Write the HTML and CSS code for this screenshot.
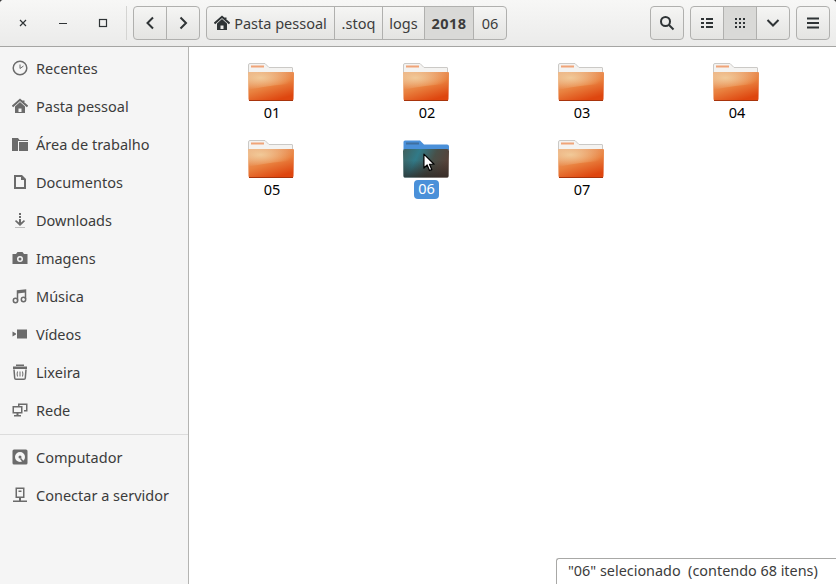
FILE: index.html
```html
<!DOCTYPE html>
<html lang="pt">
<head>
<meta charset="UTF-8" />
<meta name="viewport" content="width=device-width, initial-scale=1" />
<title>06 - Arquivos</title>
<link rel="stylesheet" href="styles.css">
</head>
<body>
  <svg class="defs" aria-hidden="true" xmlns="http://www.w3.org/2000/svg">
    <defs>
      <linearGradient id="folderBody" x1="0.1" y1="0" x2="0.6" y2="1">
        <stop offset="0" stop-color="#eaa87a"/>
        <stop offset="0.55" stop-color="#e9813f"/>
        <stop offset="1" stop-color="#de460f"/>
      </linearGradient>
      <radialGradient id="folderGlow" cx="0.27" cy="0.32" r="0.7">
        <stop offset="0" stop-color="#f2cf9f" stop-opacity="0.9"/>
        <stop offset="1" stop-color="#f2cf9f" stop-opacity="0"/>
      </radialGradient>
      <linearGradient id="folderDark" x1="0" y1="0" x2="1" y2="0.3">
        <stop offset="0" stop-color="#41605c"/>
        <stop offset="0.35" stop-color="#317a88"/>
        <stop offset="0.7" stop-color="#484f48"/>
        <stop offset="1" stop-color="#57433a"/>
      </linearGradient>
      <linearGradient id="folderShade" x1="0" y1="0" x2="0" y2="1">
        <stop offset="0.4" stop-color="#2a2420" stop-opacity="0"/>
        <stop offset="1" stop-color="#2a2420" stop-opacity="0.7"/>
      </linearGradient>
      <symbol id="folder" viewBox="0 0 46 38">
        <path d="M0.500 9V2q0-1.500 1.500-1.500h15l4 4h23q.5 0 .5 .5V10H0.500z" fill="#f4f3f1" stroke="#cbc9c6"/>
        <rect x="3" y="2.500" width="13" height="2" fill="#f0a478"/>
        <path d="M0 10q0-1 1-1h44q1 0 1 1l-.5 26q0 1.500-1.500 1.500H2q-1.500 0-1.500-1.500z" fill="url(#folderBody)"/>
        <path d="M0 10q0-1 1-1h44q1 0 1 1v11q-24 1-46 6z" fill="url(#folderGlow)"/>
        <path d="M1 37.500h44" stroke="#a8340c" stroke-width="1"/>
      </symbol>
      <symbol id="folderSelected" viewBox="0 0 46 38">
        <path d="M0.500 9V2q0-1.500 1.500-1.500h15l4 4h23q2 0 2 2V10H0.500z" fill="#4a90d9"/>
        <rect x="3" y="2.500" width="13" height="2" fill="#3f6f9f"/>
        <path d="M0 11q0-2 2-2h42q2 0 2 2l-.5 25q0 1.500-1.500 1.500H2q-1.500 0-1.500-1.500z" fill="url(#folderDark)"/>
        <path d="M0 11q0-2 2-2h42q2 0 2 2l-.5 25q0 1.500-1.500 1.500H2q-1.500 0-1.500-1.500z" fill="url(#folderShade)"/>
      </symbol>
      <symbol id="home" viewBox="0 0 16 16">
        <path d="M0.500 8.500L8 1.800 15.500 8.500M11.500 4V2.500" fill="none" stroke="currentColor" stroke-width="2"/>
        <path d="M3 8.500V15h10V8.500L8 4zM6.500 10.500h3V14h-3z" fill="currentColor" fill-rule="evenodd"/>
      </symbol>
    </defs>
  </svg>

  <div class="window">
    <header class="toolbar">
      <div class="win-controls">
        <button class="win-btn" aria-label="Fechar">
          <svg viewBox="0 0 16 16"><path d="M5 5l6 6M11 5l-6 6" class="line thin"/></svg>
        </button>
        <button class="win-btn" aria-label="Minimizar">
          <svg viewBox="0 0 16 16"><path d="M4 8.500h8" class="line thin"/></svg>
        </button>
        <button class="win-btn" aria-label="Maximizar">
          <svg viewBox="0 0 16 16"><rect x="4.500" y="4.500" width="7" height="7" class="line thin"/></svg>
        </button>
      </div>
      <div class="toolbar-sep"></div>

      <div class="linked">
        <button class="btn icon-btn" aria-label="Voltar">
          <svg viewBox="0 0 16 16"><path d="M11 2.500L5.500 8l5.500 5.500" class="line"/></svg>
        </button>
        <button class="btn icon-btn" aria-label="Avançar">
          <svg viewBox="0 0 16 16"><path d="M5.500 2.500L11 8l-5.500 5.500" class="line"/></svg>
        </button>
      </div>

      <div class="linked path">
        <button class="btn path-home">
          <svg class="home-dark"><use href="#home"/></svg>
          Pasta pessoal
        </button>
        <button class="btn path-stoq">.stoq</button>
        <button class="btn path-logs">logs</button>
        <button class="btn path-year is-active">2018</button>
        <button class="btn path-month">06</button>
      </div>

      <div class="spacer"></div>

      <button class="btn icon-btn" aria-label="Pesquisar">
        <svg viewBox="0 0 16 16"><circle cx="6.500" cy="6.500" r="4.500" class="line"/><path d="M10 10l4.500 4.500" class="line"/></svg>
      </button>

      <div class="linked">
        <button class="btn icon-btn" aria-label="Lista">
          <svg viewBox="0 0 16 16"><path d="M2 3h3v2H2zM7 3h7v2H7zM2 7h3v2H2zM7 7h7v2H7zM2 11h3v2H2zM7 11h7v2H7z" class="solid"/></svg>
        </button>
        <button class="btn icon-btn is-active" aria-label="Ícones">
          <svg viewBox="0 0 16 16"><path d="M3 3h2v2H3zM7 3h2v2H7zM11 3h2v2h-2zM3 7h2v2H3zM7 7h2v2H7zM11 7h2v2h-2zM3 11h2v2H3zM7 11h2v2H7zM11 11h2v2h-2z" class="solid"/></svg>
        </button>
        <button class="btn icon-btn" aria-label="Opções de visualização">
          <svg viewBox="0 0 16 16"><path d="M2.500 5L8 10.500 13.500 5" class="line"/></svg>
        </button>
      </div>

      <button class="btn icon-btn" aria-label="Menu">
        <svg viewBox="0 0 16 16"><path d="M2 2.500h12v2H2zM2 7h12v2H2zM2 11.500h12v2H2z" class="solid"/></svg>
      </button>
    </header>

    <div class="content">
      <nav class="sidebar">
        <a class="place">
          <svg viewBox="0 0 16 16"><circle cx="8" cy="8" r="6.800" class="side-line"/><path d="M8 4.500V8.500L11.500 6" class="side-line thin"/></svg>
          Recentes
        </a>
        <a class="place">
          <svg class="home-grey"><use href="#home"/></svg>
          Pasta pessoal
        </a>
        <a class="place">
          <svg viewBox="0 0 16 16"><path d="M0 2h6l1.500 2H16v1H6v10H0z" class="side-solid"/><path d="M7 6h9v9H7z" class="side-solid"/></svg>
          Área de trabalho
        </a>
        <a class="place">
          <svg viewBox="0 0 16 16"><path d="M2 1h8l4 4v10H2zM4 3v10h8V6H9V3z" class="side-solid" fill-rule="evenodd"/></svg>
          Documentos
        </a>
        <a class="place">
          <svg viewBox="0 0 16 16"><path d="M7 1h2v2H7zM7 4h2v2H7zM7 7h2v3.500l3-2.500 1 1.200L8 14 3 9.200 4 8l3 2.500z" class="side-solid"/><path d="M3 15h10v1H3z" class="side-solid" opacity="0.4"/></svg>
          Downloads
        </a>
        <a class="place">
          <svg viewBox="0 0 16 16"><path d="M0.500 4H4l1.500-2h5L12 4h3.500v10H0.500zM8 6a3 3 0 100 6 3 3 0 000-6z" class="side-solid" fill-rule="evenodd"/><circle cx="8" cy="9" r="1.500" class="side-solid"/></svg>
          Imagens
        </a>
        <a class="place">
          <svg viewBox="0 0 16 16"><path d="M5.500 12.500V3l8-1v9" class="side-line"/><path d="M5.500 3l8-1v2.500l-8 1z" class="side-solid"/><circle cx="3.500" cy="12.500" r="2.200" class="side-line"/><circle cx="11.500" cy="11.500" r="2.200" class="side-line"/></svg>
          Música
        </a>
        <a class="place">
          <svg viewBox="0 0 16 16"><path d="M5 3.500h10v9H5zM0.500 5.500L4 7.500v1l-3.500 2z" class="side-solid"/></svg>
          Vídeos
        </a>
        <a class="place">
          <svg viewBox="0 0 16 16"><path d="M4 0.500h8v1.500H4zM1 2.500h14V5H1z" class="side-solid"/><path d="M2 5.500l.7 8.500q.1 1.200 1.300 1.200h8q1.200 0 1.300-1.200l.7-8.500" class="side-line"/><path d="M5.500 7.500q-.8 2.500 0 5M8 7.500v5M10.500 7.500q.8 2.500 0 5" class="side-line thin"/></svg>
          Lixeira
        </a>
        <a class="place">
          <svg viewBox="0 0 16 16"><path d="M6 1.500h9.500v8H12V8h2V3H7.500v1H6z" class="side-solid"/><path d="M0.500 4h10v7.500h-4V13H9v1.500H2V13h2.500v-1.500h-4zM2 5.500V10h7V5.500z" class="side-solid" fill-rule="evenodd"/></svg>
          Rede
        </a>
        <div class="sidebar-sep"></div>
        <a class="place">
          <svg viewBox="0 0 16 16"><path d="M2 0.500h12q1.500 0 1.500 1.500v12q0 1.500-1.500 1.500H2Q0.500 15.500 0.500 14V2Q0.500 0.500 2 0.500zM8 3a5 5 0 100 10 5 5 0 000-10z" class="side-solid" fill-rule="evenodd"/><circle cx="8" cy="8" r="1.500" class="side-solid"/><path d="M8.500 9.500l3 3.500" class="side-line"/></svg>
          Computador
        </a>
        <a class="place">
          <svg viewBox="0 0 16 16"><path d="M3.500 0.500h9V11h-9zM5 2v7.500h6V2z" class="side-solid" fill-rule="evenodd"/><path d="M6.500 3.500h3v1.500h-3z" class="side-solid"/><path d="M7 11h2v2.500H7zM1 13.500h14V15H1z" class="side-solid"/></svg>
          Conectar a servidor
        </a>
      </nav>

      <main class="files">
        <div class="file"><svg class="folder-icon"><use href="#folder"/></svg><span class="file-name">01</span></div>
        <div class="file"><svg class="folder-icon"><use href="#folder"/></svg><span class="file-name">02</span></div>
        <div class="file"><svg class="folder-icon"><use href="#folder"/></svg><span class="file-name">03</span></div>
        <div class="file"><svg class="folder-icon"><use href="#folder"/></svg><span class="file-name">04</span></div>
        <div class="file"><svg class="folder-icon"><use href="#folder"/></svg><span class="file-name">05</span></div>
        <div class="file is-selected">
          <svg class="folder-icon"><use href="#folderSelected"/></svg>
          <span class="file-name">06</span>
          <svg class="cursor" viewBox="0 0 13 20"><path d="M1 1v15l3.500-3.300 2.500 6 2.500-1-2.500-5.800h5z" fill="#fff" stroke="#000" stroke-width="1.300" stroke-linejoin="round"/></svg>
        </div>
        <div class="file"><svg class="folder-icon"><use href="#folder"/></svg><span class="file-name">07</span></div>
      </main>
    </div>

    <div class="status">"06" selecionado&nbsp; (contendo 68 itens)</div>
  </div>
</body>
</html>
```

FILE: styles.css
```css
html, body {
  margin: 0;
  height: 100%;
  background: #3a3a3a;
}

.defs {
  position: absolute;
  width: 0;
  height: 0;
}

.window {
  position: relative;
  width: 836px;
  height: 584px;
  overflow: hidden;
  border-radius: 4px 4px 0 0;
  background: #fff;
  font-family: "Noto Sans", "Open Sans", sans-serif;
  font-size: 14.5px;
  color: #3c3c3c;
}

/* header bar */
.toolbar {
  box-sizing: border-box;
  height: 47px;
  padding: 6px 6px 6px 3px;
  display: flex;
  align-items: stretch;
  gap: 6px;
  background: linear-gradient(#f7f7f6, #ebebea);
  border-bottom: 1px solid #a5a5a3;
}

.win-controls {
  display: flex;
}

.win-btn {
  width: 40px;
  padding: 0;
  border: none;
  background: none;
  display: flex;
  align-items: center;
  justify-content: center;
}

.win-btn svg {
  width: 16px;
  height: 16px;
}

.toolbar-sep {
  width: 1px;
  margin-left: -3px;
  background: #d4d4d2;
}

.linked {
  display: flex;
}

.btn {
  box-sizing: border-box;
  height: 34px;
  padding: 0;
  border: 1px solid #b0b0ae;
  border-radius: 4px;
  background: linear-gradient(#f5f5f4, #e4e4e2);
  font: inherit;
  color: #3c3c3c;
  display: flex;
  align-items: center;
  justify-content: center;
  gap: 4px;
  white-space: nowrap;
}

.icon-btn {
  width: 34px;
}

.icon-btn svg {
  width: 16px;
  height: 16px;
}

.linked .btn {
  border-radius: 0;
  margin-left: -1px;
}

.linked .btn:first-child {
  border-radius: 4px 0 0 4px;
  margin-left: 0;
}

.linked .btn:last-child {
  border-radius: 0 4px 4px 0;
}

.btn.is-active {
  background: #d9d9d7;
  border-color: #b0b0ae;
}

.path-home { width: 129px; }
.path-home svg { width: 16px; height: 16px; }
.path-stoq { width: 49px; }
.path-logs { width: 43px; }
.path-year { width: 50px; font-weight: 700; letter-spacing: 0.5px; }
.path-month { width: 34px; }

.home-dark { color: #2f3436; }
.home-grey { color: #6b6b6b; }

.spacer {
  flex: 1;
}

.line {
  fill: none;
  stroke: #2f3436;
  stroke-width: 2;
}

.line.thin {
  stroke-width: 1.200;
}

.solid {
  fill: #2f3436;
}

/* sidebar + file grid */
.content {
  display: flex;
  height: 537px;
}

.sidebar {
  box-sizing: border-box;
  width: 189px;
  flex: none;
  padding-top: 2px;
  background: #f5f5f5;
  border-right: 1px solid #b4b4b2;
}

.place {
  height: 38px;
  padding-left: 12px;
  display: flex;
  align-items: center;
  gap: 8px;
}

.place svg {
  width: 16px;
  height: 16px;
  flex: none;
}

.side-solid {
  fill: #6b6b6b;
}

.side-line {
  fill: none;
  stroke: #6b6b6b;
  stroke-width: 1.500;
}

.side-line.thin {
  stroke-width: 1;
}

.sidebar-sep {
  height: 1px;
  margin: 5px 0 3px;
  background: #dcdcdc;
}

.files {
  flex: 1;
  padding: 16px 0 0 4px;
  display: grid;
  grid-template-columns: repeat(4, 155px);
  grid-auto-rows: 77px;
  align-content: start;
}

.file {
  position: relative;
  display: flex;
  flex-direction: column;
  align-items: center;
  font-size: 14.5px;
  color: #000;
}

.folder-icon {
  width: 46px;
  height: 38px;
}

.file-name {
  margin: 1px 0 0 3px;
  padding: 0 4px;
  height: 20px;
  line-height: 20px;
  border-radius: 4px;
}

.is-selected .file-name {
  margin: 2px 0 0 2px;
  height: 19px;
  line-height: 17px;
  background: #4a90d9;
  color: #fff;
}

.cursor {
  position: absolute;
  left: 75px;
  top: 13px;
  width: 12px;
  height: 19px;
}

.status {
  position: absolute;
  right: 0;
  bottom: 0;
  box-sizing: border-box;
  width: 280px;
  height: 26px;
  padding-left: 11px;
  line-height: 24px;
  font-size: 14.4px;
  background: #fff;
  border: 1px solid #a8a8a6;
  border-width: 1px 0 0 1px;
  border-radius: 3px 0 0 0;
  color: #3c3c3c;
}
```
